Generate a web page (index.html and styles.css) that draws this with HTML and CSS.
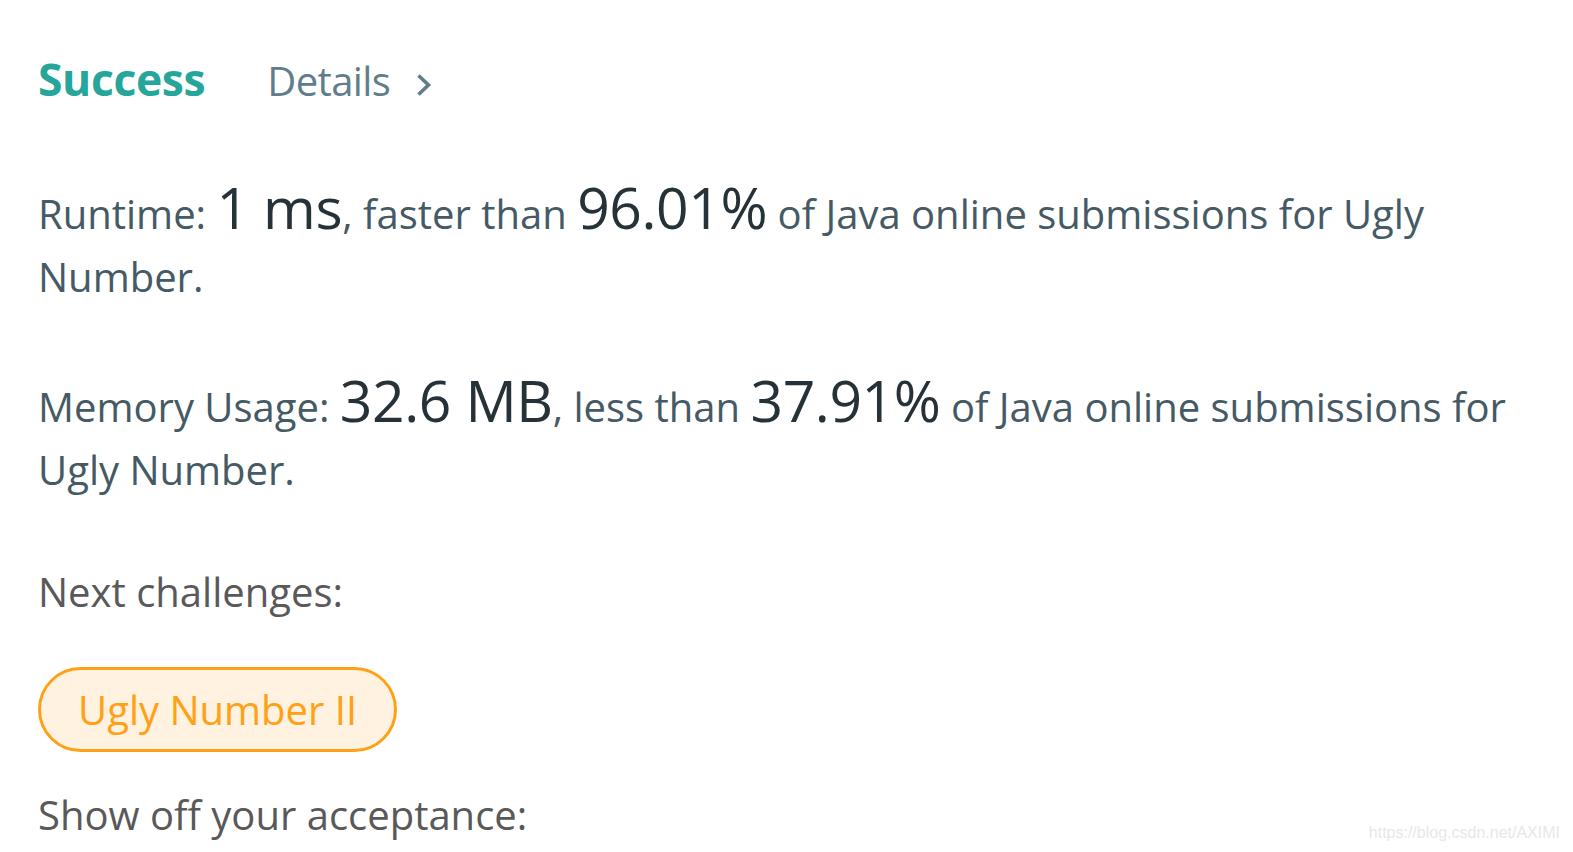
FILE: index.html
```html
<!DOCTYPE html>
<html>
<head>
<meta charset="utf-8">
<link rel="stylesheet" href="styles.css">
</head>
<body>
<div class="page">
  <div class="header">
    <span class="status">Success</span>
    <a class="details">Details
      <svg class="chev" width="16" height="24" viewBox="0 0 16 24"><path d="M2.5 2.5 L12.5 12 L2.5 21.5" fill="none" stroke="#607d8b" stroke-width="3.6"/></svg>
    </a>
  </div>
  <p class="stat first">Runtime: <span class="big">1 ms</span>, faster than <span class="big">96.01%</span> of Java online submissions for Ugly Number.</p>
  <p class="stat">Memory Usage: <span class="big">32.6 MB</span>, less than <span class="big">37.91%</span> of Java online submissions for Ugly Number.</p>
  <p class="label">Next challenges:</p>
  <div class="challenges"><a class="pill">Ugly Number II</a></div>
  <p class="label show">Show off your acceptance:</p>
</div>
<div class="watermark">https://blog.csdn.net/AXIMI</div>
</body>
</html>
```
FILE: styles.css
```css
html, body { margin: 0; padding: 0; background: #fff; }
body { font-family: "Open Sans", "Noto Sans", sans-serif; overflow: hidden; height: 852px; }
.page { padding: 48px 0 0 38px; width: 1500px; }
.header { display: flex; align-items: baseline; gap: 62px; height: 66px; }
.status { font-size: 44.5px; font-weight: 700; color: #26a69a; letter-spacing: -0.4px; }
.details { font-size: 40px; color: #607d8b; display: inline-flex; align-items: center; gap: 26px; letter-spacing: -0.6px; }
.chev { margin-top: 8px; }
.stat { margin: 67px 0 0 0; font-size: 40px; line-height: 63px; color: #455a64; }
.stat.first { margin-top: 68px; }
.big { font-size: 57px; line-height: 40px; color: #263238; letter-spacing: -0.4px; }
.label { margin: 65px 0 0 0; font-size: 40px; line-height: 52px; color: #595959; }
.challenges { margin-top: 49px; }
.pill { display: inline-block; border: 3px solid #ffa116; background: #fff2e0; color: #ffa116; border-radius: 44px; font-size: 40px; line-height: 79px; padding: 0 37px; }
.show { margin-top: 37px; }
.watermark { position: absolute; right: 13px; bottom: 10px; font-family: "Liberation Sans", Arial, sans-serif; font-size: 16px; color: #e8e8e8; }
```
